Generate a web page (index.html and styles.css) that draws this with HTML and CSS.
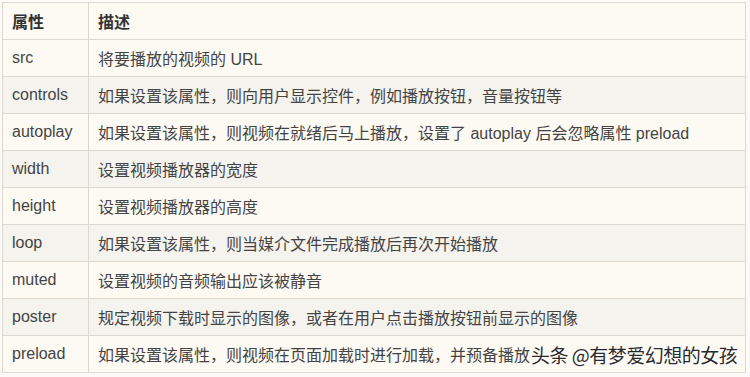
FILE: index.html
```html
<!DOCTYPE html>
<html lang="zh">
<head>
<meta charset="utf-8">
<link rel="stylesheet" href="styles.css">
</head>
<body>
<div class="wrap">
<table class="attr-table">
  <thead>
    <tr><th class="c1">属性</th><th>描述</th></tr>
  </thead>
  <tbody>
    <tr><td class="c1">src</td><td>将要播放的视频的 URL</td></tr>
    <tr><td class="c1">controls</td><td>如果设置该属性，则向用户显示控件，例如播放按钮，音量按钮等</td></tr>
    <tr><td class="c1">autoplay</td><td>如果设置该属性，则视频在就绪后马上播放，设置了 autoplay 后会忽略属性 preload</td></tr>
    <tr><td class="c1">width</td><td>设置视频播放器的宽度</td></tr>
    <tr><td class="c1">height</td><td>设置视频播放器的高度</td></tr>
    <tr><td class="c1">loop</td><td>如果设置该属性，则当媒介文件完成播放后再次开始播放</td></tr>
    <tr><td class="c1">muted</td><td>设置视频的音频输出应该被静音</td></tr>
    <tr><td class="c1">poster</td><td>规定视频下载时显示的图像，或者在用户点击播放按钮前显示的图像</td></tr>
    <tr><td class="c1">preload</td><td>如果设置该属性，则视频在页面加载时进行加载，并预备播放</td></tr>
  </tbody>
</table>
<div class="watermark">头条 @有梦爱幻想的女孩</div>
</div>
</body>
</html>
```
FILE: styles.css
```css
html, body {
  margin: 0;
  padding: 0;
  background: #fbfaf7;
}
.wrap {
  position: relative;
  width: 750px;
  height: 377px;
  padding: 2px 0 0 2px;
  box-sizing: border-box;
  overflow: hidden;
}
.attr-table {
  border-collapse: collapse;
  width: 744px;
  font-family: "Liberation Sans", "Noto Sans CJK SC", sans-serif;
  font-size: 16px;
  color: #444;
  background: #fdfaf4;
}
.attr-table tr {
  height: 37px;
}
.attr-table th,
.attr-table td {
  border: 1px solid #dcd8d0;
  padding: 0 9px;
  text-align: left;
  vertical-align: middle;
}
.attr-table th {
  font-weight: bold;
  color: #333;
}
.attr-table .c1 {
  width: 67px;
}
.attr-table tbody tr:nth-child(even) {
  background: #f5f3ee;
}
.watermark {
  position: absolute;
  left: 531px;
  top: 341px;
  font-family: "Noto Sans CJK SC", sans-serif;
  font-size: 19px;
  letter-spacing: -0.5px;
  line-height: 28px;
  color: #2a2a2a;
  text-shadow: 1px 1px 0 #fff, 0 0 2px #fff;
  white-space: nowrap;
}
```
